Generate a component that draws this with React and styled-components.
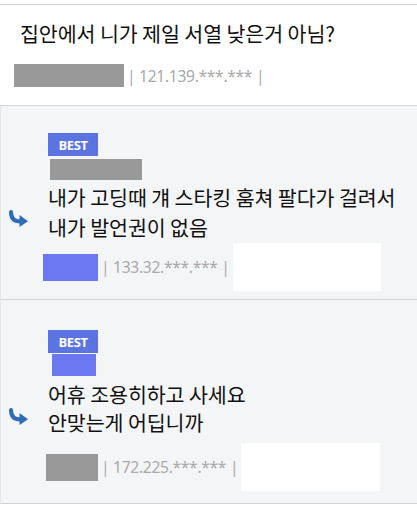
import React from "react";
import styled, { createGlobalStyle } from "styled-components";

const GlobalStyle = createGlobalStyle`
  html, body {
    margin: 0;
    padding: 0;
    background: #ffffff;
  }
  body {
    font-family: "Noto Sans CJK KR", "Noto Sans", sans-serif;
    color: #111;
  }
`;

const Page = styled.div`
  width: 417px;
  padding-top: 4px;
`;

const Post = styled.section`
  background: #ffffff;
  border-top: 1px solid #cfcfcf;
  border-bottom: 1px solid #d6d6d6;
  padding: 14px 21px 18px 14px;
`;

const Title = styled.h1`
  margin: 0 0 0 6px;
  font-size: 20.6px;
  font-weight: 400;
  line-height: 29px;
  letter-spacing: -0.1px;
  color: #111;
`;

const Meta = styled.div`
  display: flex;
  align-items: center;
  margin-top: ${(p) => p.$top || 0}px;
  margin-left: ${(p) => p.$left || 0}px;
  min-height: ${(p) => p.$height || 23}px;
`;

const Mask = styled.span`
  display: block;
  flex: none;
  width: ${(p) => p.$w}px;
  height: ${(p) => p.$h}px;
  background: ${(p) => p.$color};
  margin-left: ${(p) => p.$ml || 0}px;
`;

const Ip = styled.span`
  font-family: "Noto Sans", "Noto Sans CJK KR", sans-serif;
  font-size: 15.6px;
  color: #a9a9a9;
  padding: 0 3px;
  white-space: nowrap;
  letter-spacing: -0.3px;
`;

const Comment = styled.section`
  background: #f4f5f7;
  border-bottom: 1px solid #d3d4d6;
  border-left: 1px solid #e6e6e6;
  padding: ${(p) => p.$top}px 0 ${(p) => p.$bottom}px 0;
  display: grid;
  grid-template-columns: 47px 1fr;
`;

const Head = styled.div`
  grid-column: 2;
  display: flex;
  flex-direction: column;
  align-items: flex-start;
  gap: ${(p) => p.$gap}px;
`;

const Badge = styled.span`
  display: inline-flex;
  align-items: center;
  justify-content: center;
  width: 50px;
  height: 23px;
  background: #5b74e2;
  color: #ffffff;
  font-family: "Open Sans", "Noto Sans", sans-serif;
  font-weight: 700;
  font-size: 13px;
  letter-spacing: -0.4px;
`;

const ArrowCell = styled.div`
  grid-column: 1;
  display: flex;
  align-items: center;
  padding-left: 7px;
  padding-top: ${(p) => p.$pt}px;
`;

const Text = styled.p`
  grid-column: 2;
  margin: ${(p) => p.$mt}px 0 0 0;
  font-size: 20.6px;
  line-height: ${(p) => p.$lh}px;
  letter-spacing: -0.1px;
  color: #111;
`;

const MetaRow = styled.div`
  grid-column: 2;
`;

const ReplyArrow = () => (
  <svg width="21" height="17" viewBox="0 0 21 17">
    <path
      d="M3 2 C3 9, 6.5 11.5, 12.5 11.5"
      fill="none"
      stroke="#2d6cb6"
      strokeWidth="4"
      strokeLinecap="round"
    />
    <polygon points="11.5,5 20,11.3 11.5,17" fill="#2d6cb6" />
  </svg>
);

const comments = [
  {
    top: 27,
    bottom: 8,
    gap: 3,
    textTop: 2,
    lh: 30,
    metaTop: 1,
    arrowTop: 14,
    name: { w: 92, h: 21, color: "#999999", ml: 2 },
    lines: ["내가 고딩때 걔 스타킹 훔쳐 팔다가 걸려서", "내가 발언권이 없음"],
    mask: { w: 55, h: 27, color: "#6c78f1" },
    ip: "| 133.32.***.*** |",
    white: 148,
  },
  {
    top: 30,
    bottom: 12,
    gap: 1,
    textTop: 4,
    lh: 28,
    metaTop: 7,
    arrowTop: 20,
    name: { w: 44, h: 22, color: "#6c78f1", ml: 4 },
    lines: ["어휴 조용히하고 사세요", "안맞는게 어딥니까"],
    mask: { w: 52, h: 27, color: "#999999", ml: 3 },
    ip: "| 172.225.***.*** |",
    white: 139,
  },
];

export default function App() {
  return (
    <Page>
      <GlobalStyle />
      <Post>
        <Title>집안에서 니가 제일 서열 낮은거 아님?</Title>
        <Meta $top={16}>
          <Mask $w={110} $h={23} $color="#999999" />
          <Ip>| 121.139.***.*** |</Ip>
        </Meta>
      </Post>
      {comments.map((c, i) => (
        <Comment key={i} $top={c.top} $bottom={c.bottom}>
          <Head $gap={c.gap}>
            <Badge>BEST</Badge>
            <Mask $w={c.name.w} $h={c.name.h} $color={c.name.color} $ml={c.name.ml} />
          </Head>
          <ArrowCell $pt={c.arrowTop}>
            <ReplyArrow />
          </ArrowCell>
          <Text $lh={c.lh} $mt={c.textTop}>
            {c.lines[0]}
            <br />
            {c.lines[1]}
          </Text>
          <MetaRow>
            <Meta $left={-5} $top={c.metaTop} $height={48}>
              <Mask $w={c.mask.w} $h={c.mask.h} $color={c.mask.color} $ml={c.mask.ml} />
              <Ip>{c.ip}</Ip>
              <Mask $w={c.white} $h={48} $color="#ffffff" />
            </Meta>
          </MetaRow>
        </Comment>
      ))}
    </Page>
  );
}
